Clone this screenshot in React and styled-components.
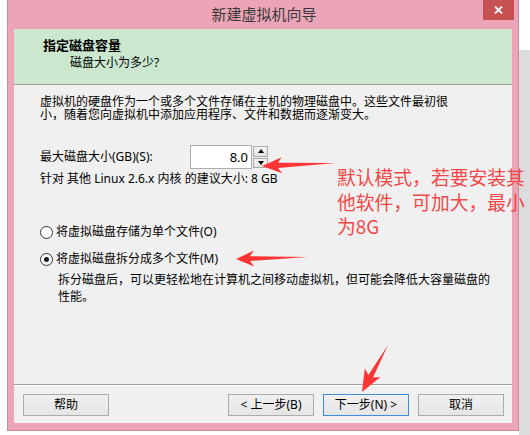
import React from 'react';
import styled, { createGlobalStyle } from 'styled-components';

const GlobalStyle = createGlobalStyle`
  html, body {
    margin: 0;
    padding: 0;
  }
  body {
    background: #fff;
    font-family: "Noto Sans", "Noto Sans CJK SC", sans-serif;
    font-size: 12px;
    color: #000;
  }
`;

const arrows = [
  { tip: [262, 166], tail: [336, 163], head: 20, wing: 8, shaft: 2.6 },
  { tip: [236, 259], tail: [308, 257], head: 18, wing: 8, shaft: 2.4 },
  { tip: [362, 392], tail: [388, 345], head: 22, wing: 9, shaft: 2.6 },
];

// tapered screenshot-tool arrow: pointed tail, wide head
const arrowPoints = ({ tip, tail, head, wing, shaft }) => {
  const [tx, ty] = tip;
  const [ex, ey] = tail;
  const len = Math.hypot(ex - tx, ey - ty);
  const dx = (ex - tx) / len;
  const dy = (ey - ty) / len;
  const nx = -dy;
  const ny = dx;
  const p = (a, b) => `${(tx + dx * a + nx * b).toFixed(1)},${(ty + dy * a + ny * b).toFixed(1)}`;
  return [p(0, 0), p(head, wing), p(head - 4, shaft), `${ex},${ey}`, p(head - 4, -shaft), p(head, -wing)].join(' ');
};

function App() {
  return (
    <>
      <GlobalStyle />
      <Page>
        <Window>
          <TitleBar>
            <Title>新建虚拟机向导</Title>
            <CloseButton>
              <svg width="9" height="8" viewBox="0 0 9 8">
                <path d="M1 0.5 L8 7.5 M8 0.5 L1 7.5" stroke="#fff" strokeWidth="1.8" />
              </svg>
            </CloseButton>
          </TitleBar>
          <Content>
            <Header>
              <HeaderTitle>指定磁盘容量</HeaderTitle>
              <HeaderSub>磁盘大小为多少?</HeaderSub>
            </Header>
            <Body>
              <Paragraph>
                虚拟机的硬盘作为一个或多个文件存储在主机的物理磁盘中。这些文件最初很
                <br />
                小，随着您向虚拟机中添加应用程序、文件和数据而逐渐变大。
              </Paragraph>
              <SizeRow>
                <SizeLabel>最大磁盘大小(GB)(S):</SizeLabel>
                <Spinner>
                  <SpinInput>8.0</SpinInput>
                  <SpinButtons>
                    <SpinButton><Caret up /></SpinButton>
                    <SpinButton><Caret /></SpinButton>
                  </SpinButtons>
                </Spinner>
              </SizeRow>
              <Hint>针对 其他 Linux 2.6.x 内核 的建议大小: 8 GB</Hint>
              <RadioGroup>
                <RadioRow>
                  <Radio />
                  将虚拟磁盘存储为单个文件(O)
                </RadioRow>
                <RadioRow>
                  <Radio checked />
                  将虚拟磁盘拆分成多个文件(M)
                </RadioRow>
              </RadioGroup>
              <Description>
                拆分磁盘后，可以更轻松地在计算机之间移动虚拟机，但可能会降低大容量磁盘的
                <br />
                性能。
              </Description>
            </Body>
            <Footer>
              <Button>帮助</Button>
              <NavButtons>
                <Button>&lt; 上一步(B)</Button>
                <Button primary>下一步(N) &gt;</Button>
                <Button>取消</Button>
              </NavButtons>
            </Footer>
          </Content>
        </Window>

        <Note>
          默认模式，若要安装其
          <br />
          他软件，可加大，最小
          <br />
          为8G
        </Note>
        <Marks width="530" height="435" viewBox="0 0 530 435">
          {arrows.map((a, i) => (
            <polygon key={i} points={arrowPoints(a)} fill="#ff3535" />
          ))}
        </Marks>
      </Page>
    </>
  );
}

const Page = styled.div`
  position: relative;
  width: 530px;
  height: 435px;
  overflow: hidden;
  background:
    linear-gradient(#fff, #fff) no-repeat 519px 0 / 11px 50px,
    linear-gradient(to right, #fff 519px, #dcdcdc 519px);
`;

const Window = styled.div`
  margin-left: 7px;
  width: 512px;
  height: 431px;
  box-sizing: border-box;
  background: #eca5b7;
  border: 1px solid #c98c9c;
  border-top: none;
  padding: 0 6px 7px;
  display: flex;
  flex-direction: column;
`;

const TitleBar = styled.div`
  position: relative;
  height: 29px;
  display: flex;
  justify-content: center;
  align-items: center;
  flex-shrink: 0;
`;

const Title = styled.div`
  font-size: 15px;
  line-height: 29px;
  color: #3a3a3a;
  margin-left: 2px;
`;

const CloseButton = styled.div`
  position: absolute;
  top: 0;
  right: -2px;
  width: 31px;
  height: 20px;
  background: #c75050;
  display: flex;
  justify-content: center;
  align-items: center;
`;

const Content = styled.div`
  flex: 1;
  display: flex;
  flex-direction: column;
  background: #f0f0f0;
`;

const Header = styled.div`
  flex-shrink: 0;
  height: 47px;
  background: #cbe8cf;
  border-bottom: 1px solid #a0a0a0;
  padding: 8px 0 0 29px;
`;

const HeaderTitle = styled.div`
  font-size: 13px;
  font-weight: bold;
  line-height: 16px;
`;

const HeaderSub = styled.div`
  margin: 2px 0 0 27px;
  line-height: 16px;
`;

const Body = styled.div`
  flex: 1;
  padding: 10px 26px 0;
`;

const Paragraph = styled.div`
  line-height: 13px;
  white-space: nowrap;
`;

const SizeRow = styled.div`
  display: flex;
  align-items: center;
  margin-top: 24px;
`;

const SizeLabel = styled.div`
  width: 150px;
  line-height: 16px;
`;

const Spinner = styled.div`
  display: flex;
  height: 24px;
`;

const SpinInput = styled.div`
  width: 62px;
  box-sizing: border-box;
  border: 1px solid #abadb3;
  background: #fff;
  text-align: right;
  padding-right: 3px;
  line-height: 22px;
  font-size: 13px;
`;

const SpinButtons = styled.div`
  display: flex;
  flex-direction: column;
  gap: 1px;
  width: 15px;
  margin-left: 1px;
  padding: 1px 0;
  box-sizing: border-box;
`;

const SpinButton = styled.div`
  flex: 1;
  border: 1px solid #acacac;
  background: linear-gradient(#f2f2f2, #e3e3e3);
  display: flex;
  justify-content: center;
  align-items: center;
`;

const Caret = styled.span`
  width: 0;
  height: 0;
  border-left: 3.5px solid transparent;
  border-right: 3.5px solid transparent;
  ${(p) => (p.up ? 'border-bottom: 4px solid #000;' : 'border-top: 4px solid #000;')}
`;

const Hint = styled.div`
  margin-top: 3px;
  line-height: 13px;
`;

const RadioGroup = styled.div`
  margin-top: 39px;
  display: flex;
  flex-direction: column;
  gap: 11px;
`;

const RadioRow = styled.div`
  display: flex;
  align-items: center;
  line-height: 16px;
`;

const Radio = styled.span`
  width: 13px;
  height: 13px;
  box-sizing: border-box;
  border-radius: 50%;
  border: 1px solid #333;
  background: #fff;
  margin-right: 3px;
  display: flex;
  justify-content: center;
  align-items: center;

  &::after {
    content: '';
    width: 5px;
    height: 5px;
    border-radius: 50%;
    background: #1a1a1a;
    display: ${(p) => (p.checked ? 'block' : 'none')};
  }
`;

const Description = styled.div`
  margin: 4px 0 0 18px;
  line-height: 17px;
  white-space: nowrap;
`;

const Footer = styled.div`
  flex-shrink: 0;
  border-top: 1px solid #a0a0a0;
  box-shadow: inset 0 1px 0 #fff;
  padding: 9px 8px 7px 9px;
  display: flex;
  justify-content: space-between;
`;

const NavButtons = styled.div`
  display: flex;
  gap: 9px;
`;

const Button = styled.div`
  width: 86px;
  height: 22px;
  box-sizing: border-box;
  border: 1px solid ${(p) => (p.primary ? '#3c8fdf' : '#acacac')};
  background: linear-gradient(#f0f0f0, #e5e5e5);
  display: flex;
  justify-content: center;
  align-items: center;
  font-size: 12px;
  line-height: 20px;
  white-space: nowrap;
`;

const Note = styled.div`
  position: absolute;
  left: 337px;
  top: 165px;
  font-family: "Noto Sans CJK SC", sans-serif;
  font-size: 18.8px;
  line-height: 24.5px;
  color: #f24848;
  white-space: nowrap;
`;

const Marks = styled.svg`
  position: absolute;
  left: 0;
  top: 0;
  pointer-events: none;
`;

export default App;
